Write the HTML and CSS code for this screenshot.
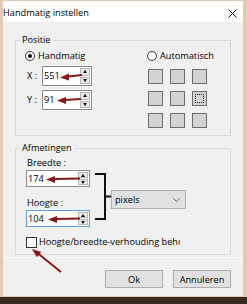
FILE: index.html
```html
<!DOCTYPE html>
<html lang="nl">
<head>
<meta charset="utf-8">
<title>Handmatig instellen</title>
<link rel="stylesheet" href="styles.css">
</head>
<body>
<div class="window">
  <div class="titlebar">
    <span class="title">Handmatig instellen</span>
    <svg class="close" width="9" height="9" viewBox="0 0 9 9"><path d="M0.5 0.5 L8.5 8.5 M8.5 0.5 L0.5 8.5" stroke="#111" stroke-width="1" fill="none"/></svg>
  </div>
  <div class="content">
    <div class="group group-pos">
      <div class="group-label">Positie</div>
      <div class="pos-body">
        <div class="pos-left">
          <div class="radio-row"><span class="radio checked"></span><span>Handmatig</span></div>
          <div class="field-row">
            <span class="axis">X :</span>
            <div class="spinbox"><span class="val">551</span><span class="spin"><span class="sbtn up"></span><span class="sbtn down"></span></span></div>
          </div>
          <div class="field-row">
            <span class="axis">Y :</span>
            <div class="spinbox"><span class="val">91</span><span class="spin"><span class="sbtn up"></span><span class="sbtn down"></span></span></div>
          </div>
        </div>
        <div class="pos-right">
          <div class="radio-row"><span class="radio"></span><span>Automatisch</span></div>
          <div class="anchor-grid">
            <span class="cell"></span><span class="cell"></span><span class="cell"></span>
            <span class="cell"></span><span class="cell"></span><span class="cell focus"></span>
            <span class="cell"></span><span class="cell"></span><span class="cell"></span>
          </div>
        </div>
      </div>
    </div>
    <div class="group group-size">
      <div class="group-label">Afmetingen</div>
      <div class="size-body">
        <div class="size-row">
          <div class="size-fields">
            <div class="field-label">Breedte :</div>
            <div class="spinbox wide"><span class="val">174</span><span class="spin"><span class="sbtn up"></span><span class="sbtn down"></span></span></div>
            <div class="field-label second">Hoogte :</div>
            <div class="spinbox wide focused"><span class="val">104</span><span class="spin"><span class="sbtn up"></span><span class="sbtn down"></span></span></div>
          </div>
          <svg class="bracket" width="21" height="47" viewBox="0 0 21 47"><path d="M5 1 H15 V46 H5 M15 23.5 H21" stroke="#111" stroke-width="2" fill="none"/></svg>
          <div class="select"><span>pixels</span><svg class="chev" width="7" height="4" viewBox="0 0 7 4"><path d="M0.5 0.5 L3.5 3.5 L6.5 0.5" stroke="#666" stroke-width="1" fill="none"/></svg></div>
        </div>
        <div class="check-row"><span class="checkbox"></span><span class="check-text">Hoogte/breedte-verhouding behouden</span></div>
      </div>
    </div>
    <div class="buttons">
      <button class="btn">Ok</button>
      <button class="btn">Annuleren</button>
    </div>
  </div>
</div>
<svg class="annotations" width="247" height="304" viewBox="0 0 247 304">
  <g fill="#861818" stroke="#861818">
    <line x1="68" y1="76.6" x2="82" y2="75" stroke-width="2"/>
    <polygon points="60,77.5 69,73.5 69,80.5" stroke="none"/>
    <line x1="65" y1="100" x2="81" y2="99" stroke-width="2"/>
    <polygon points="57,100.5 66,97 66,104" stroke="none"/>
    <line x1="54" y1="179" x2="80" y2="178.5" stroke-width="2"/>
    <polygon points="46,179.5 55,176 55,183" stroke="none"/>
    <line x1="56" y1="219" x2="80" y2="218.5" stroke-width="2"/>
    <polygon points="48,219.5 57,216 57,223" stroke="none"/>
    <line x1="38" y1="253.5" x2="61" y2="272" stroke-width="2"/>
    <polygon points="32,249 36.9,257.3 41.2,251.9" stroke="none"/>
  </g>
</svg>
</body>
</html>
```
FILE: styles.css
```css
html, body {
  margin: 0;
  padding: 0;
}
body {
  position: relative;
  width: 247px;
  height: 304px;
  overflow: hidden;
  background: #3b2c23;
  font-family: "Open Sans", "Noto Sans", sans-serif;
  font-size: 9.2px;
  line-height: 12px;
  color: #000;
}
.window {
  box-sizing: border-box;
  width: 247px;
  height: 297px;
  border-style: solid;
  border-color: #e3c9b1;
  border-width: 1px 4px 1px 3px;
  background: #f0f0f0;
  display: flex;
  flex-direction: column;
}
.titlebar {
  box-sizing: border-box;
  height: 21px;
  padding: 3px 6px 0 0;
  background: #fff;
  display: flex;
  align-items: center;
  justify-content: space-between;
}
.content {
  flex: 1;
  display: flex;
  flex-direction: column;
}
.group {
  box-sizing: border-box;
  margin: 18px 12px 0 12px;
  border: 1px solid #dadada;
}
.group-pos {
  height: 96px;
}
.group-size {
  margin-top: 12px;
  height: 107px;
}
.group-label {
  width: fit-content;
  height: 12px;
  margin: -7px 0 0 4px;
  padding: 0 2px;
  background: #f0f0f0;
}
.pos-body {
  display: flex;
  padding: 4px 0 0 9px;
}
.pos-left {
  width: 122px;
}
.radio-row {
  display: flex;
  align-items: center;
  gap: 3px;
  height: 12px;
}
.radio {
  box-sizing: border-box;
  width: 10px;
  height: 10px;
  border: 1px solid #333;
  border-radius: 50%;
  background: #fff;
  display: flex;
  align-items: center;
  justify-content: center;
}
.radio.checked::after {
  content: "";
  width: 4px;
  height: 4px;
  border-radius: 50%;
  background: #111;
}
.field-row {
  display: flex;
  align-items: center;
  height: 20px;
  margin-top: 4px;
}
.axis {
  box-sizing: border-box;
  width: 17px;
  padding-left: 2px;
}
.spinbox {
  box-sizing: border-box;
  width: 50px;
  height: 20px;
  border: 1px solid #8e8e8e;
  background: #fff;
  display: flex;
  align-items: center;
  justify-content: space-between;
}
.spinbox.wide {
  width: 64px;
  height: 17px;
  margin-top: 1px;
}
.spinbox.focused {
  border-color: #5f9fdc;
}
.val {
  padding-left: 1px;
}
.spin {
  box-sizing: border-box;
  width: 11px;
  height: 100%;
  padding: 1px 1px 1px 0;
  display: flex;
  flex-direction: column;
  gap: 1px;
}
.sbtn {
  flex: 1;
  background: #e8e8e8;
  border: 1px solid #b8b8b8;
  display: flex;
  align-items: center;
  justify-content: center;
}
.sbtn::after {
  content: "";
  width: 0;
  height: 0;
  border-left: 2.5px solid transparent;
  border-right: 2.5px solid transparent;
}
.sbtn.up::after {
  border-bottom: 3px solid #111;
}
.sbtn.down::after {
  border-top: 3px solid #111;
}
.pos-right {
  display: flex;
  flex-direction: column;
}
.anchor-grid {
  display: grid;
  grid-template-columns: repeat(3, 15px);
  grid-auto-rows: 15px;
  gap: 7px 7px;
  margin: 7px 0 0 1px;
}
.cell {
  box-sizing: border-box;
  border: 1px solid #6e6e6e;
  background: #d3d3d3;
  display: flex;
  align-items: center;
  justify-content: center;
}
.cell.focus::after {
  content: "";
  width: 9px;
  height: 9px;
  box-sizing: border-box;
  border: 1px dotted #222;
}
.size-body {
  padding: 3px 0 0 10px;
}
.size-row {
  display: flex;
  align-items: flex-start;
}
.size-fields {
  width: 64px;
}
.field-label {
  height: 12px;
  padding-left: 1px;
}
.field-label.second {
  margin-top: 10px;
}
.bracket {
  margin-top: 16px;
  flex: none;
}
.select {
  box-sizing: border-box;
  width: 75px;
  height: 19px;
  margin-top: 33px;
  padding: 0 5px 0 3px;
  border: 1px solid #adadad;
  background: #e1e1e1;
  display: flex;
  align-items: center;
  justify-content: space-between;
}
.check-row {
  display: flex;
  align-items: center;
  gap: 2px;
  height: 12px;
  margin-top: 9px;
}
.checkbox {
  box-sizing: border-box;
  width: 11px;
  height: 11px;
  border: 1px solid #333;
  background: #fff;
}
.check-text {
  width: 141px;
  overflow: hidden;
  white-space: nowrap;
}
.buttons {
  display: flex;
  justify-content: flex-end;
  gap: 10px;
  margin-top: 2px;
  padding: 12px 12px 0 0;
  border-top: 1px solid #f9f9f9;
}
.btn {
  box-sizing: border-box;
  width: 58px;
  height: 18px;
  padding: 0;
  border: 1px solid #adadad;
  background: #e1e1e1;
  font-family: "Open Sans", "Noto Sans", sans-serif;
  font-size: 9.2px;
  color: #000;
}
.annotations {
  position: absolute;
  top: 0;
  left: 0;
  pointer-events: none;
}
```
